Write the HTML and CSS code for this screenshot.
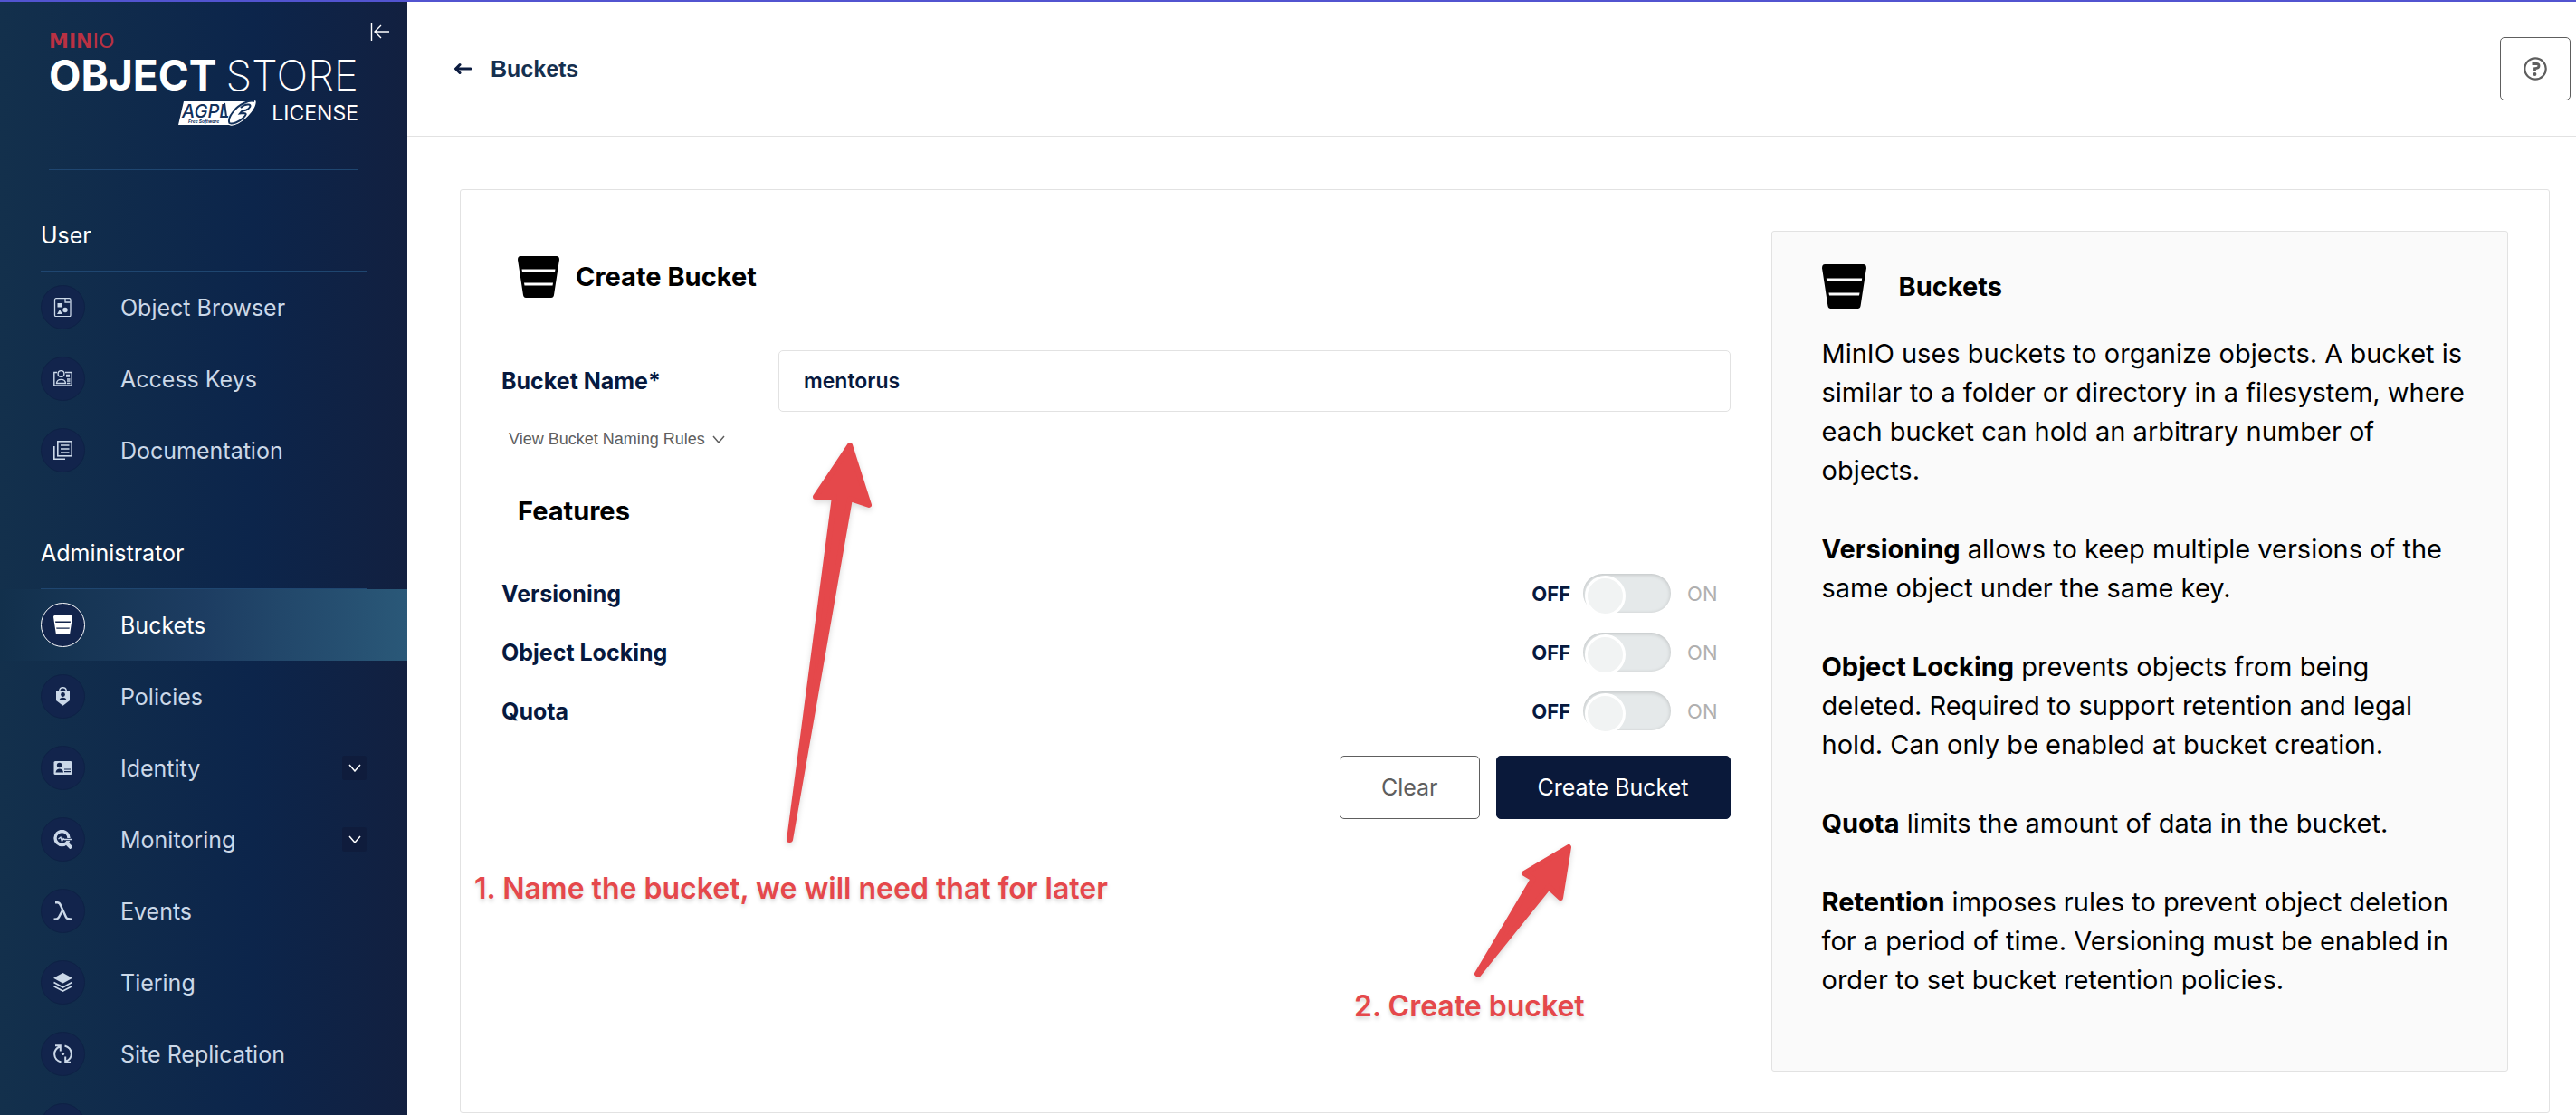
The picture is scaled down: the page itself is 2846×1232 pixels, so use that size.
FILE: index.html
```html
<!DOCTYPE html>
<html lang="en">
<head>
<meta charset="utf-8">
<title>Create Bucket</title>
<link rel="stylesheet" href="styles.css">
</head>
<body>
<svg class="sprite" aria-hidden="true">
  <symbol id="bucket" viewBox="0 0 46 46"><path fill="currentColor" fill-rule="evenodd" d="M3 0H43Q46 0 46 4L45.200 9L40 43Q39.500 46 37 46H9Q6.500 46 6 43L.800 9L0 4Q0 0 3 0ZM4.500 14.500L5 17.500H41L41.500 14.500ZM7 29.500L7.500 32.500H38.500L39 29.500Z"/></symbol>
  <symbol id="chevron" viewBox="0 0 14 9"><path d="M1 1L7 8L13 1" fill="none" stroke="currentColor" stroke-width="1.500"/></symbol>
</svg>
<div class="app">
  <aside class="sidebar">
    <div class="brand">
      <div class="brand-minio"><b>MIN</b><span>IO</span></div>
      <div class="brand-name"><b>OBJECT</b><span>STORE</span></div>
      <div class="brand-license">
        <svg class="agpl" width="88" height="30" viewBox="0 0 88 30" role="img" aria-label="AGPL v3 Free Software">
          <path d="M7 2H84L62 28H1Z" fill="#fff"/>
          <text x="5" y="20" class="agpl-name">AGPL</text>
          <text x="12" y="26" class="agpl-sub">Free Software</text>
          <path d="M52 4L54 19" fill="none" stroke="#12305a" stroke-width="2"/>
          <path d="M86 2C87 8 78 20 67 26C62 28.500 57 29 56.500 26C56 21 63 12 71 6C77 2 84 0 86 2Z" fill="#fff" stroke="#fff" stroke-width="1.200"/>
          <path d="M85 2C80 0 68 5 62 13C58 18 56 23 57.500 26C61 28 69 24 73 20C76 17 77 15 73 15L69 15.500L71 13L76 11.500C80 10 82 6 79 5.500C76 5 72 7 70 9" fill="none" stroke="#12305a" stroke-width="2"/>
        </svg>
        <span>LICENSE</span>
      </div>
      <button class="collapse" aria-label="Collapse menu">
        <svg width="22" height="22" viewBox="0 0 22 22" fill="none" stroke="#fff" stroke-width="1.400"><path d="M1.500 1V21M21 11H5.500M12 4L5 11L12 18"/></svg>
      </button>
    </div>
    <nav>
      <h2 class="nav-title">User</h2>
      <ul class="nav-list">
        <li><a class="nav-item" href="#"><span class="nav-icon"><svg viewBox="0 0 21 21" fill="none" stroke="currentColor" stroke-width="1.300"><rect x="1.500" y=".700" width="17.500" height="20" rx="1.500"/><path d="M13 1V5H18.500"/><g fill="currentColor" stroke="none"><rect x="4.500" y="6" width="5.500" height="4.500"/><circle cx="13" cy="13.500" r="2.700"/><path d="M7 13L10 18H4Z"/></g></svg></span>Object Browser</a></li>
        <li><a class="nav-item" href="#"><span class="nav-icon"><svg viewBox="0 0 21 21" fill="none" stroke="currentColor" stroke-width="1.400"><path d="M4 3.500H.800V18H20.200V3.500H13"/><circle cx="8.500" cy="5" r="3.400"/><path d="M3.500 15.500C4 10 13 10 13.500 15.500Z"/><path d="M14 6.500H18M14 8H18M15 11H18.500M15 13H18.500M15 15.500H18.500" stroke-width="1.600"/></svg></span>Access Keys</a></li>
        <li><a class="nav-item" href="#"><span class="nav-icon"><svg viewBox="0 0 21 21" fill="none" stroke="currentColor" stroke-width="1.600"><rect x="4.800" y=".800" width="15.400" height="16"/><path d="M.800 6V20.200H13M8 5H17.500M8 9H17.500M8 13H17.500"/></svg></span>Documentation</a></li>
      </ul>
      <h2 class="nav-title">Administrator</h2>
      <ul class="nav-list">
        <li><a class="nav-item active" href="#" aria-current="page"><span class="nav-icon"><svg><use href="#bucket"/></svg></span>Buckets</a></li>
        <li><a class="nav-item" href="#"><span class="nav-icon"><svg viewBox="0 0 21 21"><path d="M3 4.500H18V15L10.500 20.800L3 15Z" fill="currentColor"/><path d="M6.800 5V3.500Q7.500.700 10.500.700Q13.500.700 14.200 3.500V5" fill="none" stroke="currentColor" stroke-width="1.400"/><g fill="#12244c"><circle cx="10.500" cy="8.500" r="2.400"/><path d="M6.500 15C6.500 10.500 14.500 10.500 14.500 15Z"/></g></svg></span>Policies</a></li>
        <li><a class="nav-item" href="#"><span class="nav-icon"><svg viewBox="0 0 21 21"><rect x=".500" y="3" width="20" height="15" rx="1.500" fill="currentColor"/><g fill="#12244c"><circle cx="6.700" cy="7.500" r="2.800"/><path d="M2.500 15.500C3 10 10.500 10 11 15.500Z"/></g><path d="M12 9.500H19M12 12H19M12 14.700H19" stroke="#12244c" stroke-width="1.200"/></svg></span>Identity<span class="expand"><svg width="14" height="9"><use href="#chevron"/></svg></span></a></li>
        <li><a class="nav-item" href="#"><span class="nav-icon"><svg viewBox="0 0 21 21" fill="none" stroke="currentColor"><circle cx="9.500" cy="9" r="7.500" stroke-width="3.400"/><path d="M14.500 14.500L20 20" stroke-width="4"/><path d="M12 10.500H21" stroke="#12244c" stroke-width="3"/><path d="M5.500 10L8 8L9.500 12.500L11 9.500L12 10.500H21" stroke-width="1.300"/></svg></span>Monitoring<span class="expand"><svg width="14" height="9"><use href="#chevron"/></svg></span></a></li>
        <li><a class="nav-item" href="#"><span class="nav-icon"><svg viewBox="0 0 21 21" fill="none" stroke="currentColor" stroke-width="2.400"><path d="M2 1.300H4.500C7 1.300 7.500 3 8.500 5.500L14 17.500C14.700 19.300 16 19.700 20.500 19.700M10.500 9L6 17.500C5 19.300 3.500 19.700 .500 19.700"/></svg></span>Events</a></li>
        <li><a class="nav-item" href="#"><span class="nav-icon"><svg viewBox="0 0 21 21"><path d="M10.500 0L21 5.700L10.500 11.500L0 5.700Z" fill="currentColor"/><path d="M.500 10.500L10.500 16L20.500 10.500M.500 14.700L10.500 20L20.500 14.700" fill="none" stroke="currentColor" stroke-width="1.600"/></svg></span>Tiering</a></li>
        <li><a class="nav-item" href="#"><span class="nav-icon"><svg viewBox="0 0 21 21" fill="none" stroke="currentColor" stroke-width="2"><path d="M8.500 19.500C-1 16.500-1 6 7 2.500M2 1.300H7.800V7.500M12.500 1.500C22 4.500 22 15 14 18.500M19 19.700H13.200V13.500"/><circle cx="10.500" cy="10.500" r="1.600" fill="currentColor" stroke="none"/></svg></span>Site Replication</a></li>
        <li><a class="nav-item" href="#" aria-label="More"><span class="nav-icon"></span></a></li>
      </ul>
    </nav>
  </aside>

  <main class="main">
    <header class="page-header">
      <a class="back" href="#">
        <svg width="21" height="14" viewBox="0 0 21 14" fill="none" stroke="#0c1c40" stroke-width="3" stroke-linecap="round" stroke-linejoin="round"><path d="M19 7H3M7 2.500L2.500 7L7 11.500"/></svg>
        Buckets
      </a>
      <button class="btn help-btn" aria-label="Help">
        <svg width="26" height="26" viewBox="0 0 26 26" fill="none" stroke="currentColor"><circle cx="13" cy="13" r="11.700" stroke-width="2.200"/><path d="M9.500 7.500H14.500Q17 7.500 17 9.700Q17 12 14.500 12.300L12.500 12.700V15.500" stroke-width="2.800"/><circle cx="12.500" cy="19" r="1.900" fill="currentColor" stroke="none"/></svg>
      </button>
    </header>

    <section class="content">
      <div class="card">
        <form class="form">
          <h1 class="form-title"><svg width="46" height="46"><use href="#bucket"/></svg>Create Bucket</h1>
          <div class="field">
            <label for="bucket-name">Bucket Name*</label>
            <input id="bucket-name" type="text" value="mentorus">
          </div>
          <button type="button" class="rules">View Bucket Naming Rules <svg width="14" height="9"><use href="#chevron"/></svg></button>
          <h2 class="features">Features</h2>
          <div class="toggles">
            <div class="toggle-row"><label for="versioning">Versioning</label><span class="off">OFF</span><input id="versioning" type="checkbox" role="switch"><span class="on">ON</span></div>
            <div class="toggle-row"><label for="locking">Object Locking</label><span class="off">OFF</span><input id="locking" type="checkbox" role="switch"><span class="on">ON</span></div>
            <div class="toggle-row"><label for="quota">Quota</label><span class="off">OFF</span><input id="quota" type="checkbox" role="switch"><span class="on">ON</span></div>
          </div>
          <div class="actions">
            <button type="reset" class="btn">Clear</button>
            <button type="submit" class="btn primary">Create Bucket</button>
          </div>

          <svg class="arrow arrow-name" width="80" height="460" viewBox="0 0 80 460"><path d="M52 8L73 74L52 67L-14 444L-15 444L35 65L14 65Z"/></svg>
          <p class="note note-name">1. Name the bucket, we will need that for later</p>
          <svg class="arrow arrow-create" width="120" height="170" viewBox="0 0 120 170"><path d="M108 13L99 69L86 57L8 154L7 153L69 48L59 42Z"/></svg>
          <p class="note note-create">2. Create bucket</p>
        </form>

        <aside class="help">
          <h2><svg width="49" height="49"><use href="#bucket"/></svg>Buckets</h2>
          <p>MinIO uses buckets to organize objects. A bucket is similar to a folder or directory in a filesystem, where each bucket can hold an arbitrary number of objects.</p>
          <p><b>Versioning</b> allows to keep multiple versions of the same object under the same key.</p>
          <p><b>Object Locking</b> prevents objects from being deleted. Required to support retention and legal hold. Can only be enabled at bucket creation.</p>
          <p><b>Quota</b> limits the amount of data in the bucket.</p>
          <p><b>Retention</b> imposes rules to prevent object deletion for a period of time. Versioning must be enabled in order to set bucket retention policies.</p>
        </aside>
      </div>
    </section>
  </main>
</div>
</body>
</html>
```
FILE: styles.css
```css
* { box-sizing: border-box; }

body {
  margin: 0;
  font-family: Inter, "Liberation Sans", sans-serif;
  font-size: 25px;
  line-height: 30px;
  color: #000;
  background: #fff;
}

h1, h2, p, ul { margin: 0; padding: 0; }
ul { list-style: none; }
a { color: inherit; text-decoration: none; }
button, input { font: inherit; color: inherit; }
svg { display: block; flex: none; }
.sprite { position: absolute; width: 0; height: 0; }

.app {
  display: grid;
  grid-template-columns: 450px minmax(0, 1fr);
  height: 100vh;
  border-top: 2px solid #5254d0;
  overflow: hidden;
}

/* Sidebar */
.sidebar {
  color: #fff;
  background: linear-gradient(90deg, #13304c 0%, #0c254b 62%, #122040 100%);
  overflow: hidden;
}

.brand {
  position: relative;
  height: 186px;
  margin: 0 54px;
  padding-top: 31px;
  border-bottom: 1px solid #1f4670;
}

.brand-minio {
  font-size: 22px;
  line-height: 24px;
  color: #b93143;
}
.brand-minio b { font-family: "DejaVu Sans", sans-serif; font-weight: 700; }
.brand-minio span { font-family: "DejaVu Sans", sans-serif; font-weight: 400; }

.brand-name {
  display: flex;
  justify-content: space-between;
  font-size: 46px;
  line-height: 50px;
}
.brand-name b { font-weight: 700; }
.brand-name span { font-weight: 200; }

.brand-license {
  display: flex;
  justify-content: flex-end;
  align-items: center;
  gap: 16px;
  height: 34px;
  font-size: 23px;
}

.agpl-name { font: italic 500 20px Inter, sans-serif; fill: #12305a; }
.agpl-sub { font: italic 700 5px Inter, sans-serif; fill: #12305a; }

.collapse {
  position: absolute;
  top: 22px;
  right: -35px;
  padding: 0;
  border: 0;
  background: none;
}

.nav-title {
  height: 112px;
  margin: 0 45px;
  padding-top: 57px;
  border-bottom: 1px solid #1f4670;
  font-size: 25px;
  font-weight: 400;
}
.nav-list { padding-bottom: 2px; }

.nav-item {
  display: flex;
  align-items: center;
  gap: 39px;
  height: 79px;
  padding: 0 45px;
  color: #cbd8e8;
  font-weight: 400;
}

.nav-icon {
  display: flex;
  align-items: center;
  justify-content: center;
  flex: none;
  width: 49px;
  height: 49px;
  border: 1px solid #0e2145;
  border-radius: 50%;
  background: #12244c;
}
.nav-icon svg { width: 21px; height: 21px; }

.nav-item.active {
  color: #fff;
  background: linear-gradient(90deg, #12304c 0%, #1d3d62 50%, #2a5878 100%);
}
.active .nav-icon { border-color: #fff; }

.expand {
  display: flex;
  align-items: center;
  justify-content: center;
  width: 27px;
  height: 27px;
  margin-left: auto;
  border-radius: 3px;
  background: #0f1c3c;
  color: #fff;
}

/* Page header */
.page-header {
  display: flex;
  align-items: center;
  justify-content: space-between;
  height: 149px;
  padding: 0 6px 0 51px;
  border-bottom: 1px solid #e2e2e2;
}

.back {
  display: flex;
  align-items: center;
  gap: 20px;
  font-family: "Liberation Sans", Arial, sans-serif;
  font-weight: 700;
  color: #15304f;
}

.btn {
  height: 70px;
  padding: 0 45px;
  border: 1px solid #5e5e5e;
  border-radius: 5px;
  background: #fff;
  color: #5e5e5e;
  font-weight: 400;
}
.help-btn { padding: 0 25px; }
.btn.primary { border-color: #0a193a; background: #0a193a; color: #fff; }

/* Card */
.content { padding: 58px 29px 0 58px; }

.card {
  display: grid;
  grid-template-columns: minmax(0, 5fr) minmax(0, 3fr);
  gap: 45px;
  padding: 45px;
  border: 1px solid #e2e2e2;
  border-radius: 3px;
}

.form { position: relative; color: #07193e; }

.form-title {
  display: flex;
  align-items: center;
  gap: 18px;
  padding: 28px 18px 58px;
  font-size: 29px;
  font-weight: 700;
  color: #000;
}

.field {
  display: grid;
  grid-template-columns: 306px minmax(0, 1fr);
  align-items: center;
  font-weight: 700;
}

.field input {
  height: 68px;
  padding: 0 27px;
  border: 1px solid #e2e2e2;
  border-radius: 5px;
  font-size: 23px;
  font-weight: 600;
}

.rules {
  display: flex;
  align-items: center;
  gap: 8px;
  margin: 18px 0 0 8px;
  padding: 0;
  border: 0;
  background: none;
  font-family: "Liberation Sans", Arial, sans-serif;
  font-size: 18px;
  line-height: 24px;
  color: #5e5e5e;
}

.features {
  padding: 53px 18px 35px;
  border-bottom: 1px solid #e2e2e2;
  font-size: 29px;
  font-weight: 700;
  color: #000;
}

.toggles { padding: 7px 0 17px; }

.toggle-row {
  display: flex;
  align-items: center;
  height: 65px;
  padding-right: 14px;
}
.toggle-row label { margin-right: auto; font-weight: 700; }
.off, .on { font-size: 22px; }
.off { font-weight: 700; }
.on { font-weight: 400; color: #b0b0b0; }

.toggle-row input {
  appearance: none;
  width: 97px;
  height: 43px;
  margin: 0 18px 0 14px;
  padding: 2px;
  border-radius: 22px;
  background: #e5e9ea;
  box-shadow: inset 0 1px 4px rgba(0, 0, 0, 0.18);
}
.toggle-row input::before {
  content: "";
  display: block;
  width: 39px;
  height: 39px;
  border: 3px solid #fff;
  border-radius: 50%;
  background: #f1f3f3;
}

.actions {
  display: flex;
  justify-content: flex-end;
  gap: 18px;
}

/* Annotations drawn over the form */
.arrow, .note { position: absolute; color: #e5484b; }
.arrow {
  overflow: visible;
  fill: currentColor;
  stroke: currentColor;
  stroke-width: 6px;
  stroke-linejoin: round;
  filter: drop-shadow(0 3px 3px rgba(0, 0, 0, 0.15));
  pointer-events: none;
}
.note {
  font-size: 32px;
  font-weight: 600;
  line-height: 40px;
  white-space: nowrap;
  text-shadow: 0 3px 4px rgba(0, 0, 0, 0.15);
}
.arrow-name { left: 333px; top: 229px; }
.note-name { left: -30px; top: 707px; }
.arrow-create { left: 1071px; top: 668px; }
.note-create { left: 942px; top: 837px; }

/* Help panel */
.help {
  padding: 36px 45px 79px 55px;
  border: 1px solid #e2e2e2;
  border-radius: 3px;
  background: #fafafa;
  font-size: 29px;
  line-height: 43px;
  font-weight: 400;
}
.help h2 {
  display: flex;
  align-items: center;
  gap: 36px;
  margin-bottom: 28px;
  font-size: 29px;
  font-weight: 700;
}
.help p + p { margin-top: 44px; }
.help b { font-weight: 700; }
```
